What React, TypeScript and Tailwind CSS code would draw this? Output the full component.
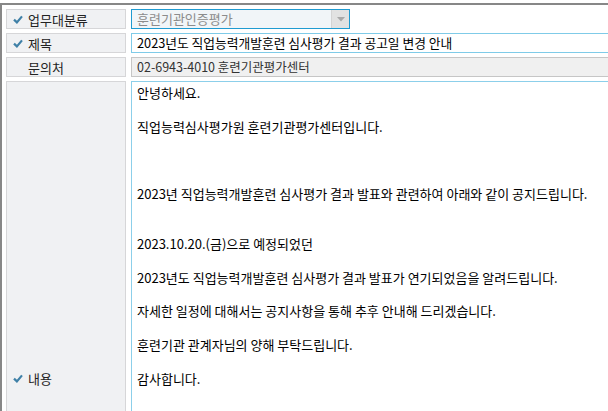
import React from "react";

const font = { fontFamily: '"Noto Sans CJK KR", "Noto Sans", sans-serif' };

const Check = () => (
  <svg width="10" height="9" viewBox="0 0 10 9" className="shrink-0">
    <path d="M1 4.6 L3.9 7.4 L9 1.4" fill="none" stroke="#3f80a7" strokeWidth="2.2" />
  </svg>
);

const Label = ({ text, required = true, tall = false }: { text: string; required?: boolean; tall?: boolean }) => (
  <div
    className={`flex items-center gap-[5px] pl-[6px] border border-[#d6d6d8] bg-[#f0f1f3] text-[13px] text-[#222] ${
      tall ? "min-h-[594px]" : "h-[20px]"
    }`}
  >
    {required ? <Check /> : <span className="w-[10px] shrink-0" />}
    <span className="leading-none">{text}</span>
  </div>
);

const lines = [
  "안녕하세요.",
  "",
  "직업능력심사평가원 훈련기관평가센터입니다.",
  "",
  "",
  "",
  "2023년 직업능력개발훈련 심사평가 결과 발표와 관련하여 아래와 같이 공지드립니다.",
  "",
  "",
  "2023.10.20.(금)으로 예정되었던",
  "",
  "2023년도 직업능력개발훈련 심사평가 결과 발표가 연기되었음을 알려드립니다.",
  "",
  "자세한 일정에 대해서는 공지사항을 통해 추후 안내해 드리겠습니다.",
  "",
  "훈련기관 관계자님의 양해 부탁드립니다.",
  "",
  "감사합니다.",
];

export default function App() {
  return (
    <div className="w-[608px] h-[411px] overflow-hidden bg-white pt-[3px]" style={font}>
      <div className="h-full border-t-2 border-l-2 border-[#878787] pl-[4px] pt-[4px]">
        <div className="grid grid-cols-[120px_600px] gap-x-[5px] gap-y-[4px]">
          <Label text="업무대분류" />
          <div className="flex h-[20px] w-[219px] border border-[#1f9bd1] bg-[#f1f5f8]">
            <span className="flex-1 pl-[5px] text-[13px] leading-[18px] text-[#8c8c8c]">훈련기관인증평가</span>
            <span className="flex w-[18px] items-center justify-center bg-[#e2e2e2] border-l border-[#d4d4d4]">
              <svg width="8" height="5" viewBox="0 0 8 5">
                <path d="M0 0 L8 0 L4 4.5 Z" fill="#a9a9a9" />
              </svg>
            </span>
          </div>

          <Label text="제목" />
          <div className="h-[20px] border border-[#7fcbe8] bg-white pl-[5px] text-[12.75px] leading-[18px] text-black">
            2023년도 직업능력개발훈련 심사평가 결과 공고일 변경 안내
          </div>

          <Label text="문의처" required={false} />
          <div className="h-[20px] border border-[#c6c6c6] bg-[#f0f0f0] pl-[5px] text-[12.5px] leading-[18px] text-[#333]">
            02-6943-4010 훈련기관평가센터
          </div>

          <Label text="내용" tall />
          <div className="min-h-[594px] border-t border-l border-[#8ccfea] bg-white pl-[5px] pt-[3px] text-[13px] leading-[16.8px] text-black">
            {lines.map((l, i) => (
              <div key={i} className="h-[16.8px] whitespace-pre">
                {l}
              </div>
            ))}
          </div>
        </div>
      </div>
    </div>
  );
}
